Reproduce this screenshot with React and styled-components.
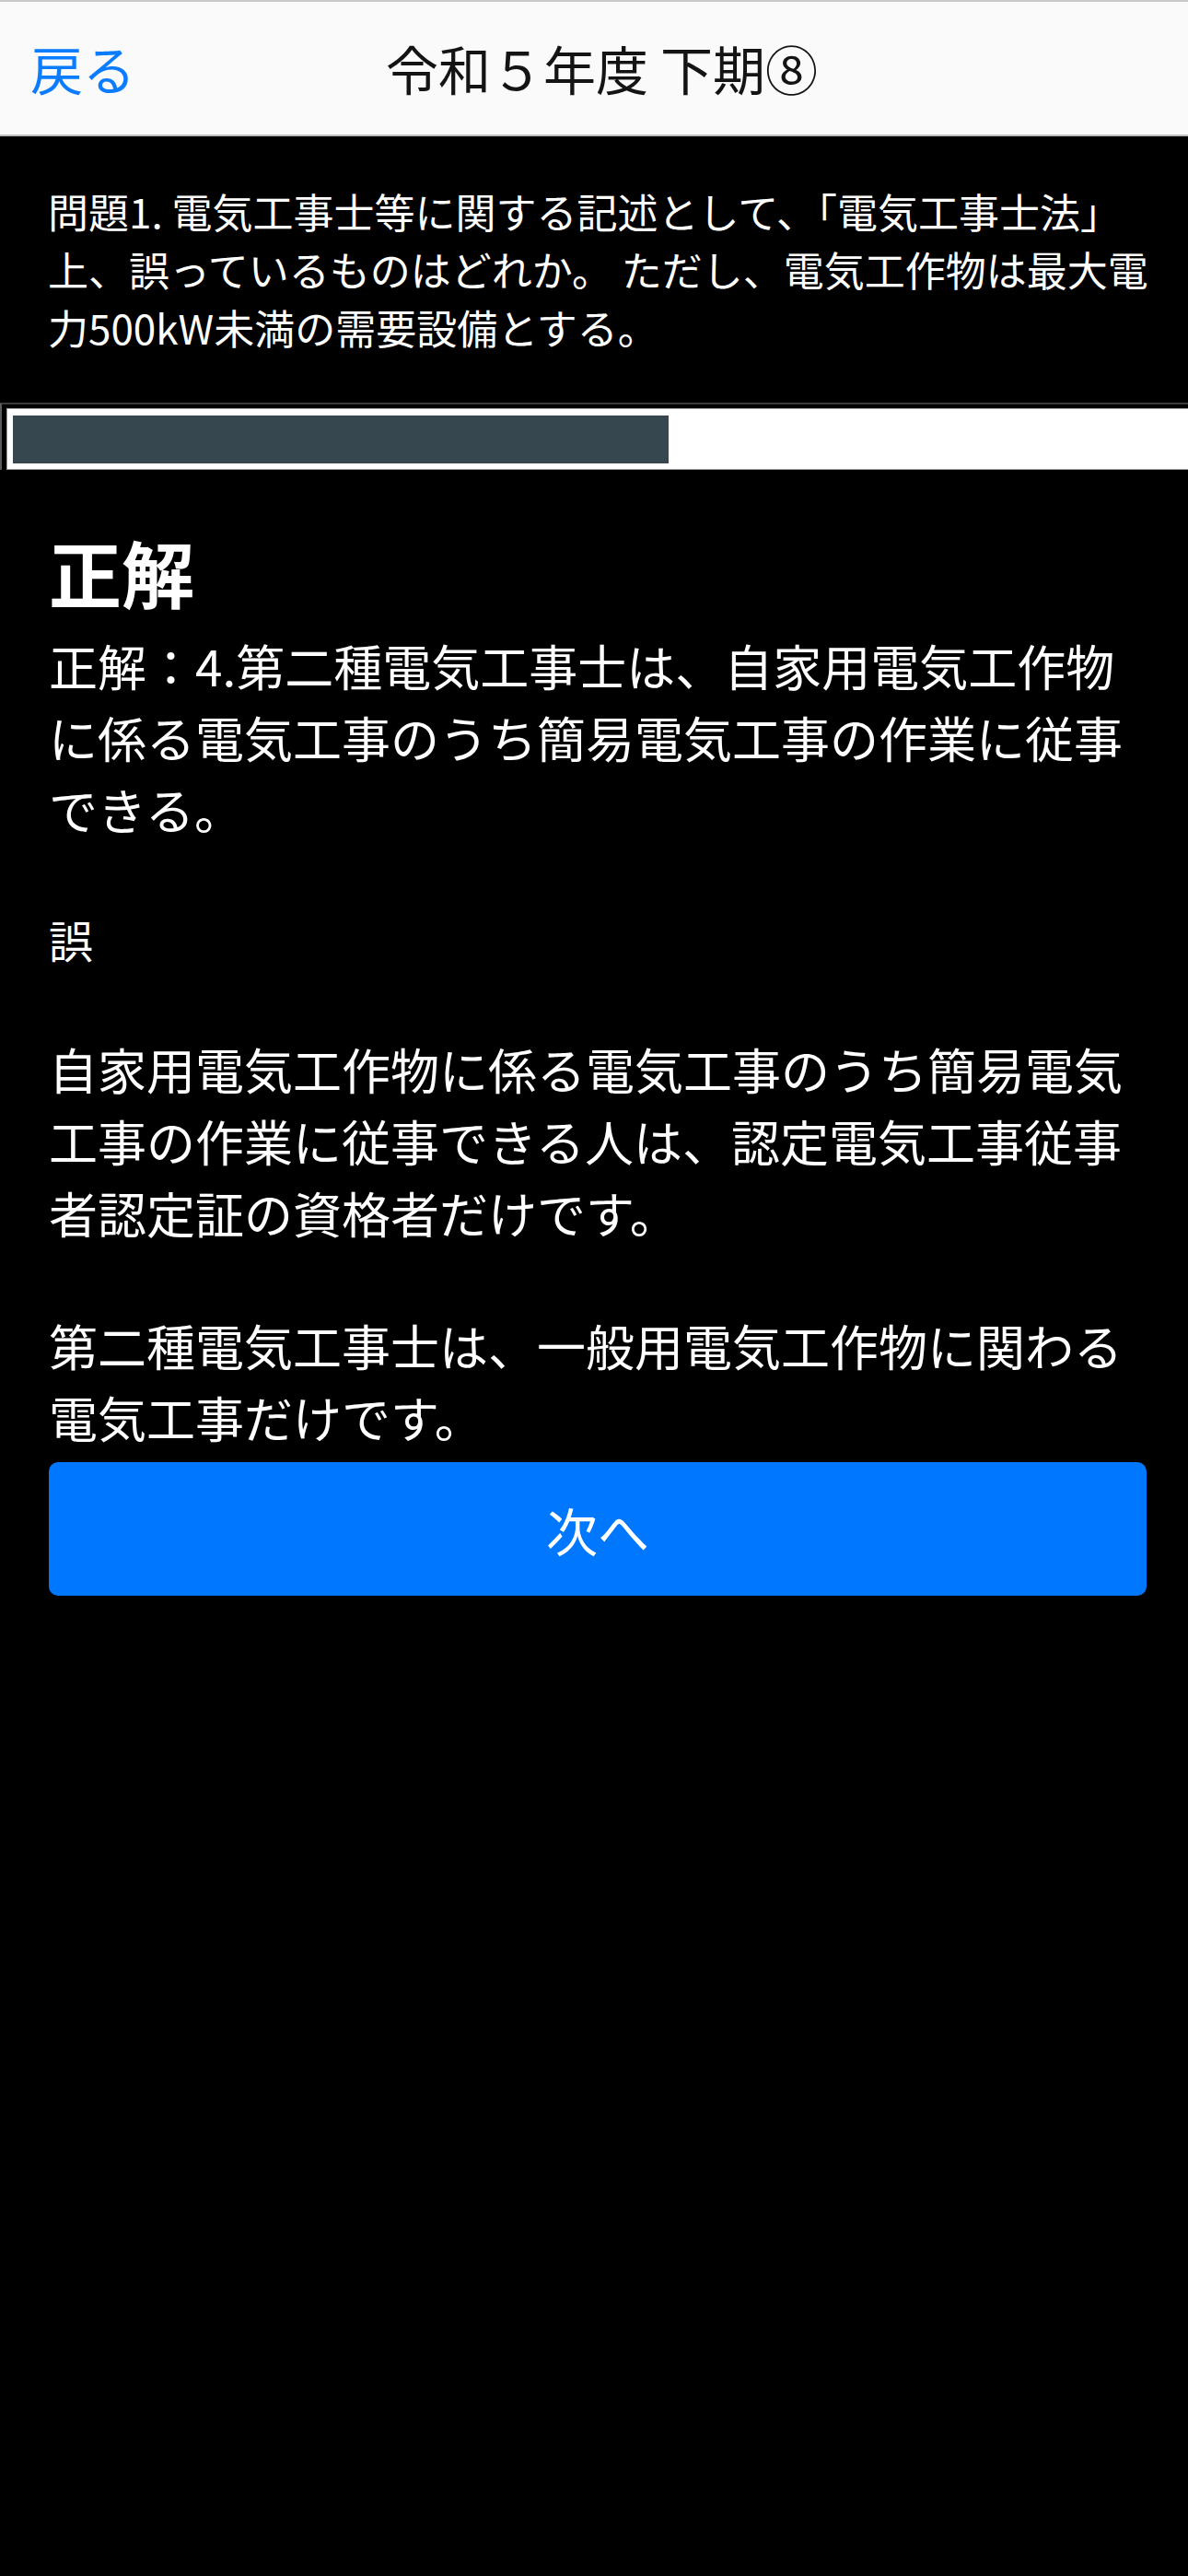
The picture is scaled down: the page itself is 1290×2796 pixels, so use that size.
import styled, { createGlobalStyle } from "styled-components";

const GlobalStyle = createGlobalStyle`
  * {
    box-sizing: border-box;
  }

  html,
  body {
    margin: 0;
    padding: 0;
    background: #000;
    overflow-x: hidden;
  }

  body {
    font-family: "Noto Sans CJK JP", "Noto Sans", sans-serif;
    color: #fff;
  }
`;

const Page = styled.div`
  min-height: 2796px;
  background: #000;
`;

const Header = styled.header`
  display: grid;
  grid-template-columns: 1fr auto 1fr;
  align-items: center;
  height: 148px;
  padding: 0 16px 2px 33px;
  background: #fafafa;
  border-top: 2px solid #c9c9c9;
  border-bottom: 2px solid #bdbdbd;
`;

const BackLink = styled.a`
  justify-self: start;
  font-size: 57px;
  color: #0a7cff;
  text-decoration: none;
  cursor: pointer;
`;

const Title = styled.h1`
  margin: 0;
  font-size: 57px;
  font-weight: 400;
  color: #141414;
  white-space: nowrap;
`;

const Question = styled.p`
  margin: 0;
  padding: 50px 22px 50px 52px;
  font-size: 44px;
  line-height: 63px;
  color: #fff;
`;

const ProgressWrap = styled.div`
  display: flex;
  padding: 4px 0 0 5px;
  border-top: 2px solid #3a3a3a;
  border-left: 2px solid #5c5c5c;
`;

const Track = styled.div`
  flex: 1;
  padding: 7px 0 6px 6px;
  background: #fff;
  border: 1px solid #9a9a9a;
  border-right: none;
`;

const Fill = styled.div`
  height: 52px;
  background: #37474f;
`;

const Body = styled.section`
  display: flex;
  flex-direction: column;
  padding: 65px 45px 0 53px;
`;

const Heading = styled.h2`
  margin: 0 0 16px;
  font-size: 79px;
  line-height: 92px;
  font-weight: 700;
`;

const Paragraphs = styled.div`
  display: flex;
  flex-direction: column;
  gap: 66px;
`;

const Text = styled.p`
  margin: 0;
  font-size: ${(p) => (p.$small ? "48px" : "53px")};
  line-height: ${(p) => (p.$small ? "72px" : "78px")};
`;

const NextButton = styled.button`
  display: flex;
  align-items: center;
  justify-content: center;
  width: 100%;
  height: 145px;
  margin-top: 10px;
  border: none;
  border-radius: 10px;
  background: #0077ff;
  color: #fff;
  font-family: inherit;
  font-size: 56px;
  cursor: pointer;
`;

const quiz = {
  title: "令和５年度 下期⑧",
  question:
    "問題1. 電気工事士等に関する記述として、「電気工事士法」上、誤っているものはどれか。 ただし、電気工作物は最大電力500kW未満の需要設備とする。",
  answer: "正解：4.第二種電気工事士は、自家用電気工作物に係る電気工事のうち簡易電気工事の作業に従事できる。",
  verdict: "誤",
  notes: [
    "自家用電気工作物に係る電気工事のうち簡易電気工事の作業に従事できる人は、認定電気工事従事者認定証の資格者だけです。",
    "第二種電気工事士は、一般用電気工作物に関わる電気工事だけです。",
  ],
  progress: 0.558,
};

export default function App() {
  return (
    <Page>
      <GlobalStyle />
      <Header>
        <BackLink>戻る</BackLink>
        <Title>{quiz.title}</Title>
      </Header>

      <Question>{quiz.question}</Question>

      <ProgressWrap>
        <Track>
          <Fill style={{ width: `${quiz.progress * 100}%` }} />
        </Track>
      </ProgressWrap>

      <Body>
        <Heading>正解</Heading>
        <Paragraphs>
          <Text>{quiz.answer}</Text>
          <Text $small>{quiz.verdict}</Text>
          {quiz.notes.map((note) => (
            <Text key={note}>{note}</Text>
          ))}
        </Paragraphs>
        <NextButton>次へ</NextButton>
      </Body>
    </Page>
  );
}
